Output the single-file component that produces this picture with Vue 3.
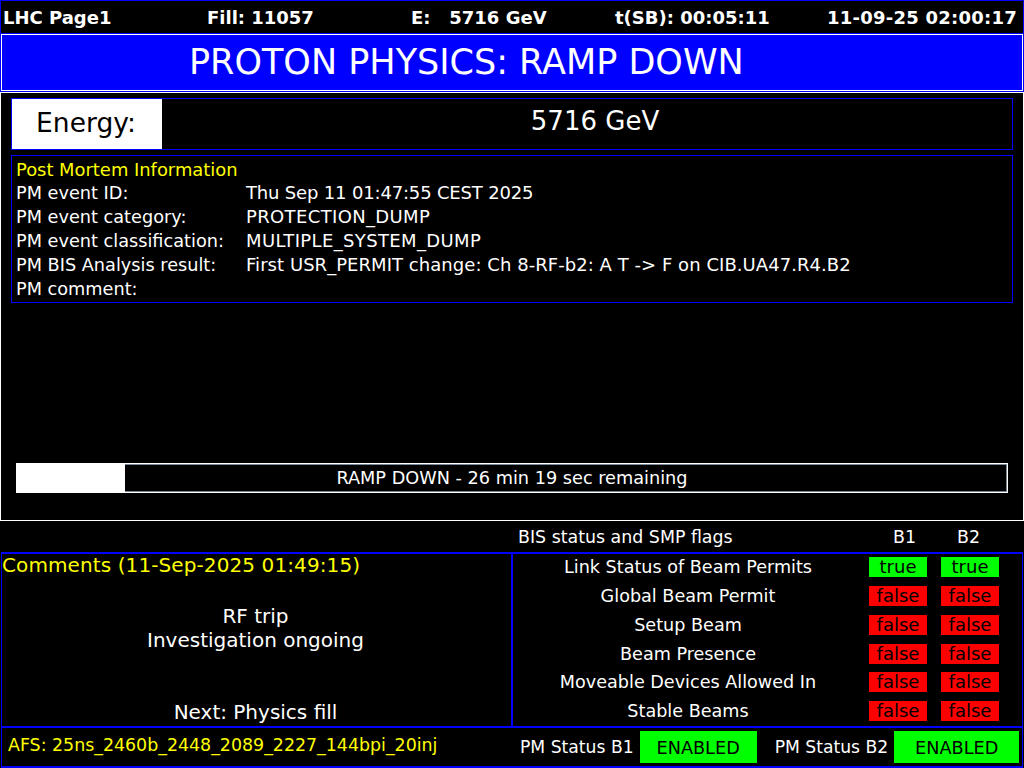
<script setup>
const top = ['LHC Page1', 'Fill: 11057', 'E:\u00a0\u00a0\u00a05716 GeV', 't(SB): 00:05:11']
const pm = [
  { k: 'PM event ID:', v: 'Thu Sep 11 01:47:55 CEST 2025', cls: 'tight' },
  { k: 'PM event category:', v: 'PROTECTION_DUMP', cls: 'caps' },
  { k: 'PM event classification:', v: 'MULTIPLE_SYSTEM_DUMP', cls: 'caps' },
  { k: 'PM BIS Analysis result:', v: 'First USR_PERMIT change: Ch 8-RF-b2: A T -> F on CIB.UA47.R4.B2', cls: 'long' },
  { k: 'PM comment:', v: '', cls: '' },
]
const flags = [
  ['Link Status of Beam Permits', 'true'],
  ['Global Beam Permit', 'false'],
  ['Setup Beam', 'false'],
  ['Beam Presence', 'false'],
  ['Moveable Devices Allowed In', 'false'],
  ['Stable Beams', 'false'],
]
</script>

<template>
  <div class="screen">
    <header class="topbar">
      <span v-for="t in top" :key="t">{{ t }}</span>
      <span class="date">11-09-25 02:00:17</span>
    </header>
    <div class="title"><span>PROTON PHYSICS: RAMP DOWN</span></div>
    <main class="main">
      <section class="energy">
        <div class="energy-label">Energy:</div>
        <div class="energy-value">5716 GeV</div>
      </section>
      <section class="pm">
        <div class="pm-head">Post Mortem Information</div>
        <div v-for="r in pm" :key="r.k" class="pm-row">
          <span class="pm-key">{{ r.k }}</span><span :class="r.cls">{{ r.v }}</span>
        </div>
      </section>
      <div class="progress">
        <div class="progress-fill"></div>
        <div class="progress-text">RAMP DOWN - 26 min 19 sec remaining</div>
      </div>
    </main>
    <div class="flags-head">
      <span class="fh-title">BIS status and SMP flags</span>
      <span class="fh-b">B1</span>
      <span class="fh-b">B2</span>
    </div>
    <section class="lower">
      <div class="comments">
        <div class="c-head">Comments (11-Sep-2025 01:49:15)</div>
        <div class="c-body">RF trip<br>Investigation ongoing</div>
        <div class="c-next">Next: Physics fill</div>
      </div>
      <div class="flags">
        <div v-for="f in flags" :key="f[0]" class="flag">
          <span class="flag-name">{{ f[0] }}</span>
          <span class="pill" :class="f[1]">{{ f[1] }}</span>
          <span class="pill" :class="f[1]">{{ f[1] }}</span>
        </div>
      </div>
    </section>
    <footer class="footer">
      <span class="afs">AFS: 25ns_2460b_2448_2089_2227_144bpi_20inj</span>
      <span class="pm-s">PM Status B1</span>
      <span class="enabled e1">ENABLED</span>
      <span class="pm-s">PM Status B2</span>
      <span class="enabled e2">ENABLED</span>
    </footer>
  </div>
</template>

<style>
html, body { margin: 0; background: #000; }
</style>

<style scoped>
.screen {
  width: 1024px; height: 768px; background: #000; color: #fff;
  font-family: "DejaVu Sans", sans-serif; font-size: 18px;
  display: flex; flex-direction: column; overflow: hidden;
}
.topbar {
  height: 33px; box-sizing: border-box; flex: none;
  border: 1px solid #00f; border-bottom: 0;
  display: grid; grid-template-columns: 204px 204px 204px 204px 1fr;
  padding: 0 6px 0 2px; align-items: center;
  font-weight: bold; font-size: 18px; white-space: pre;
}
.date { text-align: right; letter-spacing: 0.24px; }
.title {
  height: 59px; flex: none; box-sizing: border-box;
  background: #00f; border: 2px solid #fff;
  outline: 1px solid #00f; outline-offset: -1px;
  font-size: 35px; display: flex; align-items: center;
  padding: 0 0 2px 187px;
}
.main {
  height: 429px; flex: none; box-sizing: border-box;
  border: 1px solid #fff;
  padding: 5px 10px 0 10px;
  display: flex; flex-direction: column;
}
.energy {
  height: 52px; box-sizing: border-box; border: 1px solid #00f;
  display: flex; flex: none;
}
.energy-label {
  width: 150px; background: #fff; color: #000; font-size: 26.5px;
  display: flex; align-items: center; justify-content: center;
  padding: 0 2px 3px 0; box-sizing: border-box;
}
.energy-value {
  flex: 1; font-size: 26px; display: flex; align-items: center; justify-content: center;
  padding: 0 0 6px 16px;
}
.pm {
  margin-top: 5px; height: 148px; box-sizing: border-box; flex: none;
  border: 1px solid #00f; padding: 2px 4px 0 4px;
  font-size: 18px; line-height: 24px;
}
.pm-head { color: #ff0; height: 23px; font-size: 17.9px; }
.pm-row { display: flex; }
.pm-key { width: 230px; flex: none; font-size: 17.7px; }
.caps { letter-spacing: 0.36px; }
.tight { letter-spacing: -0.17px; }
.long { letter-spacing: 0.05px; }
.progress {
  position: relative; margin: 160px 5px 0 5px; height: 30px; box-sizing: border-box;
  border: 1px solid #fff; background: #000; flex: none;
  box-shadow: inset 0 0 0 1px #778899;
}
.progress-fill { width: 108px; height: 100%; background: #fff; margin: 0; }
.progress-text {
  position: absolute; inset: 0; display: flex; align-items: center; justify-content: center;
  font-size: 17.7px;
}
.flags-head {
  height: 31px; flex: none; display: flex; align-items: center; font-size: 17.4px;
}
.fh-title { margin-left: 518px; width: 375px; flex: none; }
.fh-b { width: 64px; flex: none; }
.lower {
  height: 176px; flex: none; box-sizing: border-box; display: flex;
  border: 2px solid #00f; border-left-width: 1px; border-right-width: 1px; margin: 0 1px;
}
.comments {
  width: 511px; box-sizing: border-box; border-right: 2px solid #00f;
  display: flex; flex-direction: column; align-items: center;
  font-size: 20px; flex: none;
}
.c-head { align-self: flex-start; color: #ff0; margin: -1px 0 0 0; letter-spacing: 0.1px; }
.c-body { margin: 27px 2px 0 0; text-align: center; line-height: 24px; }
.c-next { margin: auto 2px 0 0; padding-bottom: 2px; }
.flags { flex: 1; display: flex; flex-direction: column; padding-top: 3.2px; }
.flag { height: 28.8px; display: flex; align-items: flex-start; flex: none; }
.flag-name {
  width: 350px; margin-right: 6px; text-align: center; font-size: 17.6px;
  height: 20px; line-height: 20px; flex: none;
}
.pill {
  width: 58px; height: 20px; line-height: 20px; text-align: center; color: #000;
  font-size: 18px; margin-right: 14px; flex: none;
}
.pill.true { background: #0f0; }
.pill.false { background: #f00; }
.footer {
  height: 40px; flex: none; box-sizing: border-box; display: flex; align-items: center;
  border: 2px solid #00f; border-top: 0; border-left-width: 1px; border-right-width: 1px; margin: 0 1px;
  font-size: 17.2px;
}
.afs {
  color: #ff0; width: 518px; padding-left: 6px; box-sizing: border-box; flex: none;
  white-space: nowrap; font-size: 17.4px; padding-bottom: 4px;
}
.pm-s { white-space: nowrap; }
.enabled {
  background: #0f0; color: #000; height: 32px; line-height: 34px; text-align: center;
  flex: none; font-size: 17.7px;
}
.e1 { width: 117px; margin-left: 6px; margin-right: 18px; }
.e2 { width: 125px; margin-left: 6px; }
</style>
